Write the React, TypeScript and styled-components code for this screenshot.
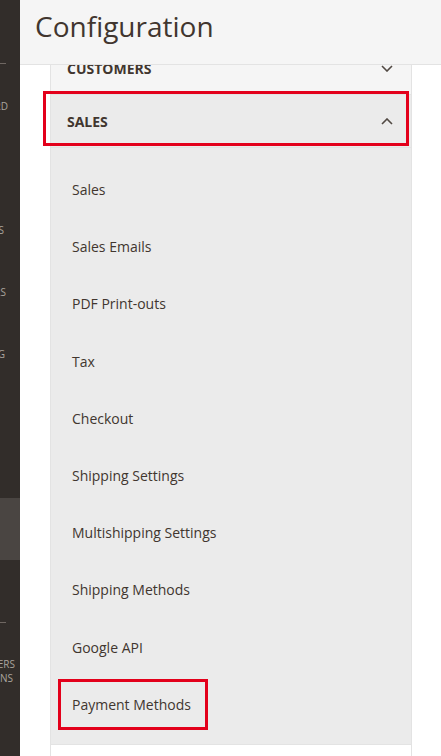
import React from "react";
import styled, { createGlobalStyle } from "styled-components";

const GlobalStyle = createGlobalStyle`
  html, body {
    margin: 0;
    padding: 0;
    height: 100%;
  }
  body {
    font-family: "Open Sans", "Liberation Sans", sans-serif;
    background: #ffffff;
    color: #41362f;
    overflow: hidden;
  }
  #root {
    height: 100%;
  }
`;

const Shell = styled.div`
  display: flex;
  height: 756px;
  overflow: hidden;
`;

// admin menu, only its right edge shows
const MenuStrip = styled.nav`
  width: 20px;
  flex-shrink: 0;
  background: #322d2a;
  display: flex;
  flex-direction: column;
  overflow: hidden;
`;

const MenuLogo = styled.div`
  height: 63px;
`;

const MenuRule = styled.div`
  height: 1px;
  width: 6px;
  background: #6f6762;
`;

const MenuItem = styled.div<{ $h: number; $active?: boolean }>`
  height: ${p => p.$h}px;
  flex-shrink: 0;
  background: ${p => (p.$active ? "#4a4542" : "transparent")};
  display: flex;
  flex-direction: column;
  justify-content: center;
  align-items: flex-end;
`;

const MenuLabel = styled.span<{ $cut: number }>`
  font-size: 10px;
  line-height: 14px;
  text-transform: uppercase;
  white-space: nowrap;
  color: #aaa49e;
  margin-right: ${p => p.$cut}px;
`;

const Main = styled.main`
  flex: 1;
  min-width: 0;
  display: flex;
  flex-direction: column;
`;

const PageHeader = styled.header`
  height: 65px;
  flex-shrink: 0;
  background: #f5f5f5;
  border-bottom: 1px solid #e3e3e3;
  padding: 8px 0 0 15px;
  box-sizing: border-box;
`;

const PageTitle = styled.h1`
  margin: 0;
  font-size: 28px;
  line-height: 36px;
  font-weight: 400;
  color: #41362f;
`;

const Body = styled.div`
  flex: 1;
  overflow: hidden;
  padding-left: 30px;
`;

const Panel = styled.div`
  width: 362px;
  box-sizing: border-box;
  margin-top: -23px;
  border-left: 1px solid #e3e3e3;
  border-right: 1px solid #e3e3e3;
  background: #ffffff;
`;

const SectionHead = styled.div<{ $open?: boolean; $marked?: boolean }>`
  position: relative;
  height: 52px;
  display: flex;
  align-items: center;
  justify-content: space-between;
  padding: 0 18px 0 16px;
  background: ${p => (p.$open ? "#ebebeb" : "#f5f5f5")};
  border-bottom: 1px solid #e3e3e3;
  font-size: 14px;
  font-weight: 700;
  text-transform: uppercase;
  color: #41362f;

  ${p =>
    p.$marked &&
    `
    &::after {
      content: "";
      position: absolute;
      top: -4px;
      bottom: 1px;
      left: -8px;
      right: 2px;
      border: 3px solid #e3001b;
      pointer-events: none;
    }
  `}
`;

const BlankSection = styled.div`
  height: 52px;
  background: #ffffff;
`;

const SubList = styled.ul`
  list-style: none;
  margin: 0;
  padding: 13px 0 11px;
  background: #ebebeb;
  border-bottom: 1px solid #e3e3e3;
`;

const SubItem = styled.li`
  height: 57.2px;
  display: flex;
  align-items: center;
  padding-left: 7px;
`;

const SubLink = styled.a<{ $marked?: boolean }>`
  display: inline-block;
  line-height: 45px;
  padding: 0 14px 0 11px;
  border: 3px solid ${p => (p.$marked ? "#e3001b" : "transparent")};
  font-size: 14px;
  color: #41362f;
  text-decoration: none;
`;

const Chevron = ({ up }: { up?: boolean }) => (
  <svg width="12" height="7" viewBox="0 0 12 7" fill="none">
    <polyline
      points={up ? "1,6 6,1 11,6" : "1,1 6,6 11,1"}
      stroke="#514943"
      strokeWidth="1.6"
    />
  </svg>
);

const menu = [
  { h: 84, label: ["Dashboard"], cut: [12] },
  { h: 51, label: [], cut: [] },
  { h: 62, label: ["Sales"], cut: [16] },
  { h: 62, label: ["Customers"], cut: [14] },
  { h: 62, label: ["Marketing"], cut: [15] },
  { h: 62, label: ["Content"], cut: [30] },
  { h: 51, label: [], cut: [] },
  { h: 62, label: ["Stores"], cut: [30], active: true },
  { h: 62, label: [], cut: [] },
];

const salesLinks = [
  "Sales",
  "Sales Emails",
  "PDF Print-outs",
  "Tax",
  "Checkout",
  "Shipping Settings",
  "Multishipping Settings",
  "Shipping Methods",
  "Google API",
  "Payment Methods",
];

const App = () => {
  return (
    <Shell>
      <GlobalStyle />
      <MenuStrip>
        <MenuLogo />
        <MenuRule />
        {menu.map((m, i) => (
          <MenuItem key={i} $h={m.h} $active={m.active}>
            {m.label.map((l, j) => (
              <MenuLabel key={j} $cut={m.cut[j]}>{l}</MenuLabel>
            ))}
          </MenuItem>
        ))}
        <MenuRule />
        <MenuItem $h={96}>
          <MenuLabel $cut={5}>Find Partners</MenuLabel>
          <MenuLabel $cut={7}>&amp; Extensions</MenuLabel>
        </MenuItem>
      </MenuStrip>

      <Main>
        <PageHeader>
          <PageTitle>Configuration</PageTitle>
        </PageHeader>
        <Body>
          <Panel>
            <SectionHead>
              <span>Customers</span>
              <Chevron />
            </SectionHead>
            <SectionHead $open $marked>
              <span>Sales</span>
              <Chevron up />
            </SectionHead>
            <SubList>
              {salesLinks.map(s => (
                <SubItem key={s}>
                  <SubLink href="#" $marked={s === "Payment Methods"}>{s}</SubLink>
                </SubItem>
              ))}
            </SubList>
            <BlankSection />
          </Panel>
        </Body>
      </Main>
    </Shell>
  );
};

export default App;
